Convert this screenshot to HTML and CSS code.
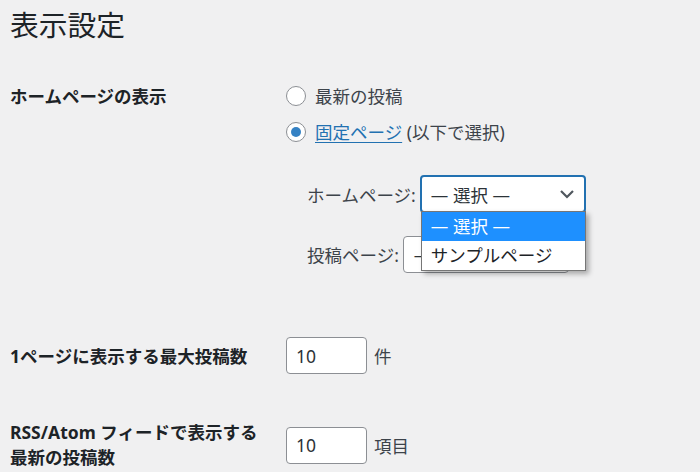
FILE: index.html
```html
<!DOCTYPE html>
<html lang="ja">
<head>
<meta charset="utf-8">
<title>表示設定</title>
<link rel="stylesheet" href="styles.css">
</head>
<body>
<div class="wrap">
  <h1 class="title">表示設定</h1>

  <div class="row row-front">
    <div class="th">ホームページの表示</div>
    <div class="td">
      <label class="radio"><span class="rb"></span><span>最新の投稿</span></label>
      <label class="radio"><span class="rb checked"></span><span><a class="link" href="#">固定ページ</a> (以下で選択)</span></label>
      <div class="subs">
        <div class="subrow">
          <span class="sublabel">ホームページ:</span>
          <div class="select focused">
            <span>— 選択 —</span>
            <svg class="chev" width="16" height="10" viewBox="0 0 16 10"><path d="M2 2 L8 8 L14 2" fill="none" stroke="#50575e" stroke-width="2.2"/></svg>
            <div class="dropdown">
              <div class="opt sel">— 選択 —</div>
              <div class="opt">サンプルページ</div>
            </div>
          </div>
        </div>
        <div class="subrow subrow2">
          <span class="sublabel">投稿ページ:</span>
          <div class="select">
            <span>— 選択 —</span>
            <svg class="chev" width="16" height="10" viewBox="0 0 16 10"><path d="M2 2 L8 8 L14 2" fill="none" stroke="#50575e" stroke-width="2.2"/></svg>
          </div>
        </div>
      </div>
    </div>
  </div>

  <div class="row row-num">
    <div class="th">1ページに表示する最大投稿数</div>
    <div class="td inline"><span class="input">10</span><span class="unit">件</span></div>
  </div>

  <div class="row row-rss">
    <div class="th">RSS/Atom フィードで表示する<br>最新の投稿数</div>
    <div class="td inline"><span class="input">10</span><span class="unit">項目</span></div>
  </div>
</div>
</body>
</html>
```

FILE: styles.css
```css
html, body {
  margin: 0;
  padding: 0;
  background: #f0f0f1;
}
body {
  font-family: "Noto Sans", "Noto Sans CJK JP", sans-serif;
  font-size: 17.5px;
  color: #3c434a;
  overflow: hidden;
}
.wrap {
  padding-left: 10px;
}
.title {
  margin: 6px 0 0;
  font-size: 28.75px;
  font-weight: 400;
  line-height: 37px;
  color: #1d2327;
}
.row {
  display: grid;
  grid-template-columns: 276px 1fr;
}
.row-front {
  margin-top: 35px;
  align-items: start;
}
.th {
  font-weight: 700;
  color: #1d2327;
  line-height: 36px;
}
.radio {
  display: flex;
  align-items: center;
  height: 36px;
  line-height: 36px;
}
.rb {
  box-sizing: border-box;
  width: 20px;
  height: 20px;
  border: 1px solid #8c8f94;
  border-radius: 50%;
  background: #fff;
  margin-right: 9px;
  display: flex;
  align-items: center;
  justify-content: center;
}
.rb.checked::after {
  content: "";
  width: 10px;
  height: 10px;
  border-radius: 50%;
  background: #3582c4;
}
.link {
  color: #2271b1;
  text-decoration: underline;
  text-underline-offset: 3px;
}
.subs {
  padding-left: 21px;
  margin-top: 25px;
}
.subrow {
  display: flex;
  align-items: center;
  height: 38px;
}
.subrow2 {
  margin-top: 23px;
  height: 37px;
}
.sublabel {
  margin-right: 4px;
}
.select {
  position: relative;
  box-sizing: border-box;
  width: 166px;
  height: 37px;
  border: 1px solid #8c8f94;
  border-radius: 4px;
  background: #fff;
  display: flex;
  align-items: center;
  padding-left: 10px;
  color: #2c3338;
}
.select.focused {
  height: 38px;
  border: 2px solid #2271b1;
  padding-left: 9px;
}
.chev {
  position: absolute;
  right: 9px;
  top: 50%;
  margin-top: -5px;
}
.dropdown {
  position: absolute;
  left: -1px;
  top: 100%;
  margin-top: 0;
  width: 165px;
  box-sizing: border-box;
  border: 1px solid #767676;
  background: #fff;
  box-shadow: 3px 3px 5px rgba(0, 0, 0, 0.3);
  z-index: 5;
}
.opt {
  height: 29px;
  line-height: 29px;
  padding-left: 9px;
  color: #1d2327;
}
.opt.sel {
  background: #1e90ff;
  color: #fff;
}
.row-num {
  margin-top: 64px;
  align-items: center;
}
.row-rss {
  margin-top: 46px;
  align-items: center;
}
.row-rss .th {
  line-height: 25px;
}
.inline {
  display: flex;
  align-items: center;
}
.input {
  box-sizing: border-box;
  width: 81px;
  height: 37px;
  border: 1px solid #8c8f94;
  border-radius: 4px;
  background: #fff;
  display: flex;
  align-items: center;
  padding-left: 9px;
  color: #2c3338;
}
.unit {
  margin-left: 7px;
}
```
